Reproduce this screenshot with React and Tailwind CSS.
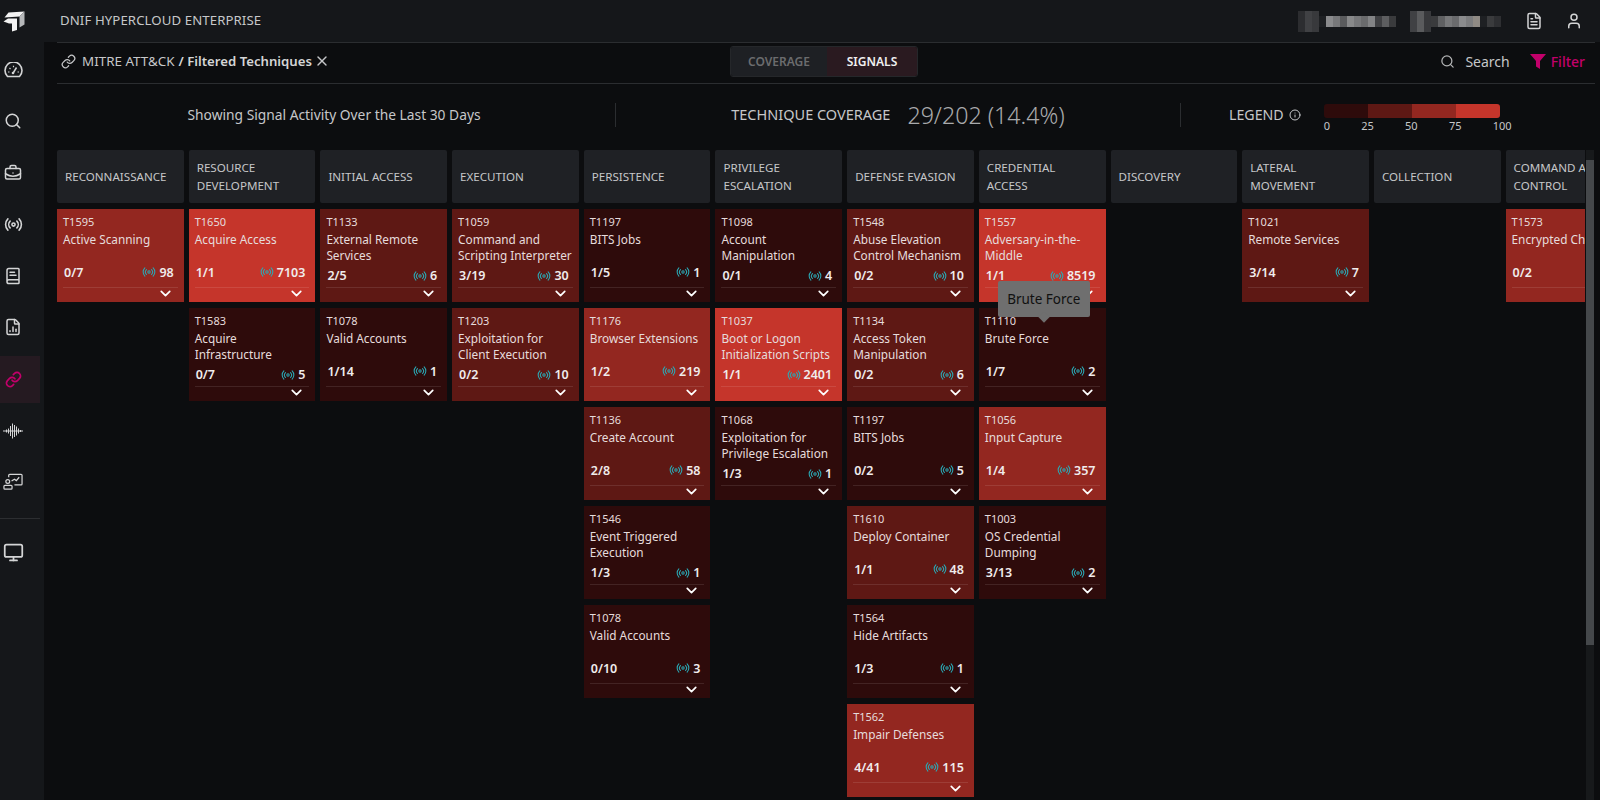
import React from 'react';
import {
  Search,
  BriefcaseBusiness,
  Radio,
  BookText,
  FileChartColumn,
  Monitor,
  FileText,
  User,
  X,
  Info,
  ChevronDown,
  Link,
} from 'lucide-react';

const levels = {
  0: 'bg-[#2e0b0b]',
  1: 'bg-[#5e1814]',
  2: 'bg-[#932720]',
  3: 'bg-[#c5352b]',
};

const columns = [
  { name: 'RECONNAISSANCE', cards: [
    { id: 'T1595', title: 'Active Scanning', score: '0/7', hits: '98', level: 2 },
  ] },
  { name: 'RESOURCE DEVELOPMENT', cards: [
    { id: 'T1650', title: 'Acquire Access', score: '1/1', hits: '7103', level: 3 },
    { id: 'T1583', title: 'Acquire Infrastructure', score: '0/7', hits: '5', level: 0 },
  ] },
  { name: 'INITIAL ACCESS', cards: [
    { id: 'T1133', title: 'External Remote Services', score: '2/5', hits: '6', level: 1 },
    { id: 'T1078', title: 'Valid Accounts', score: '1/14', hits: '1', level: 0 },
  ] },
  { name: 'EXECUTION', cards: [
    { id: 'T1059', title: 'Command and Scripting Interpreter', score: '3/19', hits: '30', level: 1 },
    { id: 'T1203', title: 'Exploitation for Client Execution', score: '0/2', hits: '10', level: 1 },
  ] },
  { name: 'PERSISTENCE', cards: [
    { id: 'T1197', title: 'BITS Jobs', score: '1/5', hits: '1', level: 0 },
    { id: 'T1176', title: 'Browser Extensions', score: '1/2', hits: '219', level: 2 },
    { id: 'T1136', title: 'Create Account', score: '2/8', hits: '58', level: 1 },
    { id: 'T1546', title: 'Event Triggered Execution', score: '1/3', hits: '1', level: 0 },
    { id: 'T1078', title: 'Valid Accounts', score: '0/10', hits: '3', level: 0 },
  ] },
  { name: 'PRIVILEGE ESCALATION', cards: [
    { id: 'T1098', title: 'Account Manipulation', score: '0/1', hits: '4', level: 0 },
    { id: 'T1037', title: 'Boot or Logon Initialization Scripts', score: '1/1', hits: '2401', level: 3 },
    { id: 'T1068', title: 'Exploitation for Privilege Escalation', score: '1/3', hits: '1', level: 0 },
  ] },
  { name: 'DEFENSE EVASION', cards: [
    { id: 'T1548', title: 'Abuse Elevation Control Mechanism', score: '0/2', hits: '10', level: 1 },
    { id: 'T1134', title: 'Access Token Manipulation', score: '0/2', hits: '6', level: 1 },
    { id: 'T1197', title: 'BITS Jobs', score: '0/2', hits: '5', level: 0 },
    { id: 'T1610', title: 'Deploy Container', score: '1/1', hits: '48', level: 1 },
    { id: 'T1564', title: 'Hide Artifacts', score: '1/3', hits: '1', level: 0 },
    { id: 'T1562', title: 'Impair Defenses', score: '4/41', hits: '115', level: 2 },
  ] },
  { name: 'CREDENTIAL ACCESS', cards: [
    { id: 'T1557', title: 'Adversary-in-the-Middle', score: '1/1', hits: '8519', level: 3 },
    { id: 'T1110', title: 'Brute Force', score: '1/7', hits: '2', level: 0, tooltip: true },
    { id: 'T1056', title: 'Input Capture', score: '1/4', hits: '357', level: 2 },
    { id: 'T1003', title: 'OS Credential Dumping', score: '3/13', hits: '2', level: 0 },
  ] },
  { name: 'DISCOVERY', cards: [] },
  { name: 'LATERAL MOVEMENT', cards: [
    { id: 'T1021', title: 'Remote Services', score: '3/14', hits: '7', level: 1 },
  ] },
  { name: 'COLLECTION', cards: [] },
  { name: 'COMMAND AND CONTROL', cards: [
    { id: 'T1573', title: 'Encrypted Channel', score: '0/2', hits: '12', level: 2 },
  ] },
];

// blurred out user name in the top bar
const blurWordOne = [
  ['h-[21px]', 'bg-[#2c2d30]'], ['h-[21px]', 'bg-[#404144]'], ['h-[21px]', 'bg-[#38393c]'], ['h-[11px]', 'bg-[#1e2023]'],
  ['h-[11px]', 'bg-[#8a8b8d]'], ['h-[11px]', 'bg-[#77787a]'], ['h-[11px]', 'bg-[#5a5b5d]'], ['h-[11px]', 'bg-[#88898a]'],
  ['h-[11px]', 'bg-[#77787a]'], ['h-[11px]', 'bg-[#6a6b6d]'], ['h-[11px]', 'bg-[#838486]'], ['h-[11px]', 'bg-[#3f4043]'],
  ['h-[11px]', 'bg-[#5d5e60]'], ['h-[11px]', 'bg-[#3a3b3d]'],
];
const blurWordTwo = [
  ['h-[21px]', 'bg-[#404144]'], ['h-[21px]', 'bg-[#5a5b5d]'], ['h-[21px]', 'bg-[#38393c]'], ['h-[11px]', 'bg-[#3a3b3d]'], ['h-[11px]', 'bg-[#5f6062]'],
  ['h-[11px]', 'bg-[#77787a]'], ['h-[11px]', 'bg-[#6a6b6d]'], ['h-[11px]', 'bg-[#8a8b8d]'], ['h-[11px]', 'bg-[#7c7d7f]'],
  ['h-[11px]', 'bg-[#8f8a84]'], ['h-[11px]', 'bg-[#1e2023]'], ['h-[11px]', 'bg-[#3a3b3d]'], ['h-[11px]', 'bg-[#2e2f32]'],
];

const Logo = () => (
  <svg width="22" height="22" viewBox="0 0 22 22">
    <path d="M5.5 1.5 L21.5 0.5 L16.5 5.5 L1.5 6.5 Z" fill="#f2f2f2" />
    <path d="M21.5 0.5 V13.5 L16.5 16.5 V5.5 Z" fill="#b5b7b9" />
    <path d="M0.5 10.5 L5 7.5 H14 V19 L9 20.5 V12.5 H6 Z" fill="#f2f2f2" />
  </svg>
);

const GaugeIcon = () => (
  <svg width="19" height="16" viewBox="0 0 19 16" fill="none" stroke="currentColor">
    <path d="M3.5 14.5 A8.5 8.5 0 1 1 15.5 14.5 Z" strokeWidth="1.6" />
    <path d="M9.5 10.5 L12.5 5.5" strokeWidth="1.5" />
    <circle cx="9" cy="11" r="1.3" fill="currentColor" stroke="none" />
    <path d="M4 10 H5.5 M5.5 6 L6.5 7 M9.5 3.8 V5.2 M13.5 10 H15" strokeWidth="1.2" />
  </svg>
);

const WaveIcon = () => (
  <svg width="20" height="16" viewBox="0 0 20 16" fill="none" stroke="currentColor" strokeWidth="1">
    <path d="M0 8 H20" />
    <path d="M3.5 6.5 V9.5 M5.5 5.5 V10.5 M7.5 3 V13 M9.5 0.5 V15.5 M11.5 2 V14 M13.5 3.5 V12.5 M15.5 5.5 V10.5 M17.5 7 V9" />
  </svg>
);

const MonitorChart = () => (
  <svg width="21" height="18" viewBox="0 0 21 18" fill="none" stroke="currentColor" strokeWidth="1.3">
    <path d="M6 4 V2 a1 1 0 0 1 1-1 H19 a1 1 0 0 1 1 1 V11 a1 1 0 0 1-1 1 H12" />
    <path d="M9 8 L12 6 L14 7.5 L17 4" />
    <circle cx="5" cy="8.5" r="2" />
    <rect x="1" y="12.5" width="8.5" height="4" rx="1" />
  </svg>
);

const SideItem = ({ children, active }) => (
  <div className={`h-[47px] w-10 pl-[3px] flex items-center ${active ? 'bg-[#251a21] text-[#c2006a]' : 'text-[#d4d5d6]'}`}>
    <div className="w-[20px] flex justify-center">{children}</div>
  </div>
);

const Sidebar = () => (
  <aside className="w-[44px] shrink-0 bg-[#15171a] flex flex-col">
    <div className="h-[42px] w-10 pl-[3px] pt-[1px] flex items-center text-[#eee]"><Logo /></div>
    <div className="flex flex-col gap-[4.6px] pt-[4px]">
      <SideItem><GaugeIcon /></SideItem>
      <SideItem><Search size={18} /></SideItem>
      <SideItem><BriefcaseBusiness size={18} /></SideItem>
      <SideItem><Radio size={19} /></SideItem>
      <SideItem><BookText size={18} /></SideItem>
      <SideItem><FileChartColumn size={18} /></SideItem>
      <SideItem active><Link size={17} strokeWidth={2.4} /></SideItem>
      <SideItem><WaveIcon /></SideItem>
      <SideItem><MonitorChart /></SideItem>
    </div>
    <div className="w-10 h-px bg-[#2c2e31] mt-[12px]" />
    <div className="w-10 h-[47px] mt-[10px] pl-[3px] flex items-center text-[#d4d5d6]"><Monitor size={21} /></div>
  </aside>
);

const TopBar = () => (
  <header className="h-[42px] shrink-0 bg-[#15171a] flex items-center justify-between pl-[16px] pr-[17px]">
    <span className="text-[13.2px] text-[#c6c7c9] tracking-[0.1px]">DNIF HYPERCLOUD ENTERPRISE</span>
    <div className="flex items-center">
      <div className="flex items-center mr-[14px]">
        {blurWordOne.map(([h, c], i) => <div key={i} className={`w-[7px] ${h} ${c}`} />)}
      </div>
      <div className="flex items-center mr-[24px]">
        {blurWordTwo.map(([h, c], i) => <div key={i} className={`w-[7px] ${h} ${c}`} />)}
      </div>
      <FileText size={18} className="text-[#d4d5d6] mr-[22px]" />
      <User size={18} className="text-[#d4d5d6]" />
    </div>
  </header>
);

const SubBar = () => (
  <div className="h-[42px] shrink-0 ml-[13px] mr-[5px] pb-[3px] border-y border-[#2b2d30] flex items-center">
    <div className="w-[673px] flex items-center text-[13.4px] text-[#c6c7c9] pl-[4px]">
      <Link size={15} className="mr-[6px]" />
      <span>MITRE ATT&amp;CK</span>
      <span className="font-semibold ml-[4px] text-[13.2px] text-[#d4d5d6]">/ Filtered Techniques</span>
      <X size={16} className="ml-[2px]" />
    </div>
    <div className="w-[188px] h-[31px] rounded-[3px] border border-[#25272a] flex overflow-hidden text-[12px] font-semibold">
      <div className="w-[96px] bg-[#1e2024] text-[#6b6c6e] flex items-center justify-center">COVERAGE</div>
      <div className="flex-1 bg-[#2a1a20] text-[#f0f0f0] flex items-center justify-center">SIGNALS</div>
    </div>
    <div className="flex-1 flex items-center justify-end pr-[10px]">
      <Search size={15} className="text-[#b4b5b6] mr-[10px]" />
      <span className="text-[14px] text-[#c6c7c9] mr-[20px]">Search</span>
      <svg width="16" height="16" viewBox="0 0 16 16" className="mr-[5px] mb-[2px]"><path d="M0 1 H16 L10 8 V16 L6 13.5 V8 Z" fill="#c2006a" /></svg>
      <span className="text-[14px] font-medium text-[#c2006a]">Filter</span>
    </div>
  </div>
);

const StatsRow = () => (
  <div className="h-[66px] shrink-0 ml-[13px] mr-[5px] pb-[4px] flex items-center">
    <div className="w-[559px] pr-[4px] flex justify-center border-r border-[#2b2d30] h-[24px] items-center">
      <span className="text-[13.8px] text-[#c6c7c9]">Showing Signal Activity Over the Last 30 Days</span>
    </div>
    <div className="w-[565px] flex justify-center items-center border-r border-[#2b2d30] h-[24px]">
      <span className="text-[14.5px] text-[#c6c7c9] mr-[17px]">TECHNIQUE COVERAGE</span>
      <span className="text-[23.2px] font-light text-[#a9aaac]">29/202 (14.4%)</span>
    </div>
    <div className="flex-1 flex items-center pl-[48px]">
      <span className="text-[14.2px] text-[#c6c7c9]">LEGEND</span>
      <Info size={12} className="text-[#c6c7c9] ml-[5px] mr-[23px]" />
      <div className="w-[176px] mt-[8px]">
        <div className="flex h-[14px] rounded-[3px] overflow-hidden">
          <div className={`flex-1 ${levels[0]}`} />
          <div className={`flex-1 ${levels[1]}`} />
          <div className={`flex-1 ${levels[2]}`} />
          <div className={`flex-1 ${levels[3]}`} />
        </div>
        <div className="flex justify-between text-[11px] text-[#c6c7c9] leading-[16px] w-[188px] -mr-[12px]">
          <span>0</span><span>25</span><span>50</span><span>75</span><span>100</span>
        </div>
      </div>
    </div>
  </div>
);

const Card = ({ id, title, score, hits, level, tooltip }) => (
  <div className={`relative h-[93px] shrink-0 pl-[6px] pr-[5px] pt-[5px] flex flex-col text-[#e6dcdc] ${levels[level]}`}>
    <span className="text-[11px] leading-[15px] whitespace-nowrap">{id}</span>
    <span className="text-[11.8px] leading-[15.5px] mt-[3px]">{title}</span>
    {/* the count row sits a little lower under a two line title */}
    <div className={`${title.length > 18 ? 'mt-[5px]' : 'mt-[17px]'} flex items-center justify-between pr-[5px] pl-[1px] text-[12.5px] leading-[15px] font-semibold text-[#f0ecec]`}>
      <span>{score}</span>
      <span className="flex items-center gap-[3px] whitespace-nowrap">
        <Radio size={14} strokeWidth={1.8} className="text-[#2aa9b5]" />
        {hits}
      </span>
    </div>
    <div className="absolute left-[6px] right-[6px] top-[78px] h-px bg-white/10" />
    <div className="absolute right-[10px] top-[76px] flex">
      <ChevronDown size={17} strokeWidth={2.4} className="text-white" />
    </div>
    {tooltip && (
      <div className="absolute left-[19px] -top-[27px] h-[36px] w-[92px] bg-[#6f6f6f] rounded-[2px] text-[#111] text-[13.5px] flex items-center justify-center z-10">
        Brute Force
        <div className="absolute -bottom-[4px] left-[42px] w-[8px] h-[8px] bg-[#6f6f6f] rotate-45" />
      </div>
    )}
  </div>
);

const Column = ({ name, cards }) => (
  <div className="w-[126.7px] shrink-0 flex flex-col gap-[6px]">
    <div className="h-[53px] shrink-0 bg-[#1f2125] rounded-[2px] px-[8px] flex items-center text-[11.6px] leading-[17.5px] text-[#c6c7c9]">
      <span className="whitespace-pre-line">{name === 'COMMAND AND CONTROL' ? 'COMMAND AND\nCONTROL' : name}</span>
    </div>
    {cards.map((c) => <Card key={c.id} {...c} />)}
  </div>
);

export default function App() {
  return (
    <div className="w-[1600px] h-[800px] overflow-hidden flex bg-[#0c0d0f] font-['Noto_Sans',sans-serif]">
      <Sidebar />
      <div className="flex-1 min-w-0 flex flex-col">
        <TopBar />
        <SubBar />
        <StatsRow />
        <div className="flex-1 min-h-0 flex pl-[13px]">
          <div className="flex-1 min-w-0 overflow-hidden flex gap-[5px] items-start">
            {columns.map((col) => <Column key={col.name} {...col} />)}
          </div>
          <div className="w-[8px] ml-[1px] mr-[6px] flex flex-col shrink-0 bg-[#17191b]">
            <div className="h-[10px]" />
            <div className="h-[485px] bg-[#45484b]" />
          </div>
        </div>
      </div>
    </div>
  );
}
